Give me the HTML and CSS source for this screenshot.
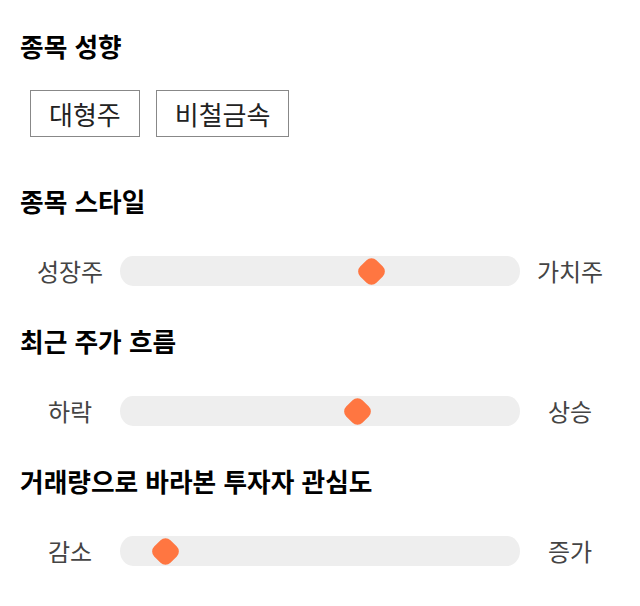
FILE: index.html
```html
<!DOCTYPE html>
<html lang="ko">
<head>
<meta charset="utf-8">
<link rel="stylesheet" href="styles.css">
</head>
<body>
<main class="page">
  <section class="section">
    <h2 class="title">종목 성향</h2>
    <div class="chips">
      <span class="chip">대형주</span>
      <span class="chip">비철금속</span>
    </div>
  </section>
  <section class="section">
    <h2 class="title">종목 스타일</h2>
    <div class="slider-row">
      <span class="label">성장주</span>
      <div class="track"><span class="thumb" style="left:62.75%"></span></div>
      <span class="label">가치주</span>
    </div>
  </section>
  <section class="section">
    <h2 class="title">최근 주가 흐름</h2>
    <div class="slider-row">
      <span class="label">하락</span>
      <div class="track"><span class="thumb" style="left:59.25%"></span></div>
      <span class="label">상승</span>
    </div>
  </section>
  <section class="section">
    <h2 class="title">거래량으로 바라본 투자자 관심도</h2>
    <div class="slider-row">
      <span class="label">감소</span>
      <div class="track"><span class="thumb" style="left:11.25%"></span></div>
      <span class="label">증가</span>
    </div>
  </section>
</main>
</body>
</html>
```
FILE: styles.css
```css
html, body {
  margin: 0;
  padding: 0;
  background: #ffffff;
}
body {
  font-family: "Noto Sans CJK KR", "Noto Sans", sans-serif;
  color: #111;
}
.page {
  padding: 28px 20px;
  display: flex;
  flex-direction: column;
  gap: 30px;
}
.section {
  display: flex;
  flex-direction: column;
}
.title {
  margin: 0;
  font-size: 25.7px;
  line-height: 36px;
  font-weight: 700;
  color: #000;
}
.chips {
  display: flex;
  gap: 16px;
  margin: 26px 0 16px;
  padding-left: 10px;
}
.chip {
  box-sizing: border-box;
  height: 47px;
  line-height: 45px;
  padding: 0 18px;
  border: 1px solid #888;
  font-size: 26px;
  color: #222;
}
.slider-row {
  display: grid;
  grid-template-columns: 100px 1fr 100px;
  align-items: center;
  height: 44px;
  margin-top: 30px;
}
.label {
  text-align: center;
  font-size: 24px;
  line-height: 44px;
  color: #444;
}
.track {
  position: relative;
  height: 30px;
  background: #eeeeee;
  border-radius: 13px / 15px;
}
.thumb {
  position: absolute;
  top: 50%;
  width: 23px;
  height: 23px;
  margin: -11.5px 0 0 -11.5px;
  background: #ff7641;
  border-radius: 7px;
  transform: rotate(45deg);
}
```
